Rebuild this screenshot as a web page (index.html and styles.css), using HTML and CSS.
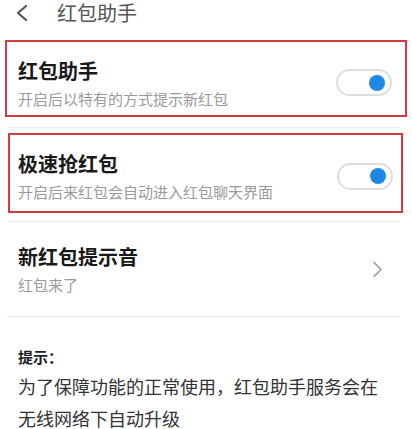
FILE: index.html
```html
<!DOCTYPE html>
<html lang="zh-CN">
<head>
    <meta charset="UTF-8">
    <meta name="viewport" content="width=device-width, initial-scale=1.0">
    <title>红包助手</title>
    <link rel="stylesheet" href="styles.css">
</head>
<body>
    <header class="topbar">
        <svg class="back" width="14" height="16" viewBox="0 0 14 16">
            <polyline points="11,1 3,8 11,15" fill="none" stroke="#555" stroke-width="2.2" stroke-linecap="round" stroke-linejoin="round"/>
        </svg>
        <span class="topbar-title">红包助手</span>
    </header>

    <main>
        <div class="item item-first marked">
            <div class="item-text">
                <div class="item-title">红包助手</div>
                <div class="item-desc">开启后以特有的方式提示新红包</div>
            </div>
            <div class="switch on"><span class="knob"></span></div>
        </div>
        <div class="divider"></div>

        <div class="item item-second marked">
            <div class="item-text">
                <div class="item-title">极速抢红包</div>
                <div class="item-desc">开启后来红包会自动进入红包聊天界面</div>
            </div>
            <div class="switch on"><span class="knob"></span></div>
        </div>
        <div class="divider"></div>

        <div class="item item-third">
            <div class="item-text">
                <div class="item-title">新红包提示音</div>
                <div class="item-desc">红包来了</div>
            </div>
            <svg class="arrow" width="11" height="17" viewBox="0 0 11 17">
                <polyline points="2,1.5 9,8.5 2,15.5" fill="none" stroke="#999" stroke-width="1.6" stroke-linecap="round" stroke-linejoin="round"/>
            </svg>
        </div>
        <div class="divider"></div>

        <div class="tips">
            <div class="tips-head">提示：</div>
            <p class="tips-body">为了保障功能的正常使用，红包助手服务会在无线网络下自动升级</p>
        </div>
    </main>
</body>
</html>
```

FILE: styles.css
```css
body {
    margin: 0;
    background-color: #ffffff;
    font-family: "Noto Sans CJK SC", "Noto Sans", sans-serif;
    color: #222;
    width: 412px;
    overflow: hidden;
}

.topbar {
    height: 25px;
    display: flex;
    align-items: center;
    padding-left: 15px;
}

.back {
    display: block;
}

.topbar-title {
    margin-left: 28px;
    font-size: 20px;
    line-height: 25px;
    color: #555;
}

main {
    padding-top: 15px;
}

.item {
    display: flex;
    align-items: center;
    justify-content: space-between;
    box-sizing: border-box;
}

.marked {
    border: 2px solid #d8393f;
}

.item-first {
    margin: 0 5px 0 5px;
    height: 77px;
    padding: 8px 13px 0 11px;
}

.item-second {
    margin: 5px 9px 0 8px;
    height: 80px;
    padding: 6px 8px 0 8px;
}

.item-third {
    margin: 0 7px;
    height: 94px;
    padding: 0 22px 0 11px;
}

.item-title {
    font-size: 20px;
    font-weight: 700;
    line-height: 28px;
    color: #1a1a1a;
}

.item-desc {
    font-size: 15px;
    line-height: 20px;
    margin-top: 4px;
    color: #9a9a9a;
}

.switch {
    width: 56px;
    height: 27px;
    box-sizing: border-box;
    border: 2px solid #dddddd;
    border-radius: 14px;
    background-color: #fff;
    display: flex;
    align-items: center;
    justify-content: flex-end;
    padding-right: 5px;
}

.knob {
    width: 16px;
    height: 16px;
    border-radius: 50%;
    background-color: #1e88e5;
}

.divider {
    height: 1px;
    background-color: #ececec;
    margin: 0 12px 0 7px;
}

.item-first + .divider {
    margin-top: 10px;
}

.item-second + .divider {
    margin-top: 8px;
}

.tips {
    padding: 30px 18px 0 18px;
}

.tips-head {
    font-size: 15px;
    font-weight: 700;
    line-height: 20px;
    color: #222;
}

.tips-body {
    margin: 3px 0 0 0;
    font-size: 18px;
    line-height: 32px;
    color: #333;
    width: 370px;
}
```
